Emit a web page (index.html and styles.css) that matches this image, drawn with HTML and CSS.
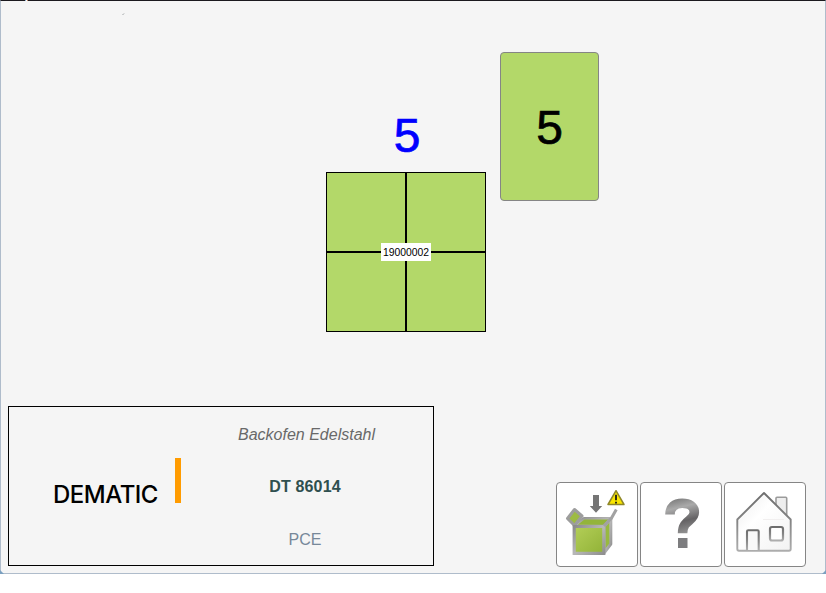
FILE: index.html
```html
<!DOCTYPE html>
<html lang="de">
<head>
<meta charset="utf-8">
<title>Dematic</title>
<link rel="stylesheet" href="styles.css">
</head>
<body>
<main class="screen">
  <svg class="specks" width="130" height="18" aria-hidden="true">
    <path d="M25 .5h1" stroke="#8fb4d2"/><path d="M26 .5h1" stroke="#fff"/><path d="M27 .5h1" stroke="#c98c68"/>
    <path d="M122 14.5h2" stroke="#c9cbcc"/><path d="M123 13.5h2" stroke="#dedfdf"/>
  </svg>
  <section class="stage">
    <div class="source">
      <div class="source-count">5</div>
      <div class="tote">
        <span class="cell"></span><span class="cell"></span>
        <span class="cell"></span><span class="cell"></span>
        <span class="tote-id">19000002</span>
      </div>
    </div>
    <div class="target">5</div>
  </section>
  <section class="footer">
    <div class="product">
      <div class="brand"><span class="brand-name">DEMATIC</span><span class="brand-bar"></span></div>
      <div class="details">
        <div class="description">Backofen Edelstahl</div>
        <div class="article">DT 86014</div>
        <div class="unit">PCE</div>
      </div>
    </div>
    <nav class="actions">
      <button class="action" aria-label="Box">
        <svg width="80" height="83" viewBox="557 483 80 83">
          <defs>
            <linearGradient id="green" x1="0" y1="0" x2="1" y2="1"><stop offset="0" stop-color="#b4cf58"/><stop offset="1" stop-color="#91b237"/></linearGradient>
            <linearGradient id="edge" x1="0" y1="0" x2="1" y2="1"><stop offset="0" stop-color="#8c8c8c"/><stop offset=".5" stop-color="#b8b8b8"/><stop offset="1" stop-color="#909090"/></linearGradient>
          </defs>
          <path d="M574 526L584 518.200H611.500L603.500 526Z" fill="#93b43b" stroke="url(#edge)" stroke-width="2.600" stroke-linejoin="round"/>
          <path d="M567.500 518.500L574.500 509.500L582 516L574.500 525.500Z" fill="#9dbb43" stroke="#9d9d9d" stroke-width="3" stroke-linejoin="round"/>
          <path d="M604 526.500L610.800 518.500V544L604 553Z" fill="#98b940" stroke="url(#edge)" stroke-width="3" stroke-linejoin="round"/>
          <path d="M574.200 526.500H603.800V553.300H574.200Z" fill="url(#green)" stroke="url(#edge)" stroke-width="3.200"/>
          <path d="M604 526L611.500 518L616.300 509.500" fill="none" stroke="#a2a2a2" stroke-width="3"/>
          <path d="M593 495H599V506H602.200L596 512.800L589.800 506H593Z" fill="#757575"/>
          <path d="M616 490.700L624 504.500H608Z" fill="#fae600" stroke="#8f8728" stroke-width="1.500" stroke-linejoin="round"/>
          <path d="M616 494.800V500.300M616 501.700V503.600" stroke="#292713" stroke-width="1.900"/>
        </svg>
      </button>
      <button class="action" aria-label="Hilfe">
        <svg width="80" height="83" viewBox="641 483 80 83">
          <defs><linearGradient id="steel" gradientUnits="userSpaceOnUse" x1="673" y1="498" x2="682" y2="535"><stop offset="0" stop-color="#777"/><stop offset=".28" stop-color="#aaa"/><stop offset=".65" stop-color="#656365"/><stop offset="1" stop-color="#959595"/></linearGradient></defs>
          <path d="M670 514.600C670 507 674.500 503.300 682.200 503.300C689.500 503.300 694.300 506.500 694.300 512.200C694.300 521.500 682.600 519.500 682.600 533.200" fill="none" stroke="url(#steel)" stroke-width="9.600"/>
          <path d="M678 538H687.500V548H678Z" fill="#7d7d7f"/>
        </svg>
      </button>
      <button class="action" aria-label="Startseite">
        <svg width="80" height="83" viewBox="725 483 80 83">
          <defs>
            <linearGradient id="wall" x1="0" y1="0" x2="1" y2="1"><stop offset="0" stop-color="#ececec"/><stop offset=".4" stop-color="#fff"/><stop offset="1" stop-color="#f2f2f2"/></linearGradient>
            <linearGradient id="line" x1="0" y1="0" x2="0" y2="1"><stop offset="0" stop-color="#6e6e6e"/><stop offset=".5" stop-color="#858585"/><stop offset="1" stop-color="#adadad"/></linearGradient>
          </defs>
          <path d="M776 510V498.200Q776 497.200 777 497.200H785.700Q786.700 497.200 786.700 498.200V518Z" fill="#eee" stroke="#9b9b9b" stroke-width="1.600"/>
          <path d="M737.300 519.500L764 493L790.700 519.500V549Q790.700 550.700 789 550.700H739Q737.300 550.700 737.300 549Z" fill="url(#wall)" stroke="url(#line)" stroke-width="1.900" stroke-linejoin="round"/>
          <path d="M763 519.500H784" stroke="#f1efef"/>
          <path d="M747 550V531.500Q747 530.300 748.300 530.300H757.500Q758.700 530.300 758.700 531.500V550" fill="#f9f9f9" stroke="url(#line)" stroke-width="2.100"/>
          <rect x="770" y="527" width="13" height="13.500" rx="2" fill="#fff" stroke="url(#line)" stroke-width="2.200"/>
        </svg>
      </button>
    </nav>
  </section>
</main>
</body>
</html>
```
FILE: styles.css
```css
* { box-sizing: border-box; }
body { margin: 0; background: #fff; font-family: "Liberation Sans", Arial, sans-serif; }
.screen {
  position: relative;
  height: 574px;
  border: 1px solid #afbccb;
  border-top-color: #1b191e;
  background: #f5f5f5;
}
.screen::before, .screen::after {
  content: "";
  position: absolute;
  bottom: -1px;
  border-top: 4px solid transparent;
}
.screen::before { left: -1px; border-left: 4px solid #7ba0c0; }
.screen::after { right: -1px; border-right: 4px solid #7ba0c0; }
.specks { position: absolute; top: -1px; left: -1px; }
.stage {
  display: flex;
  gap: 14px;
  height: 405px;
  padding: 51px 0 0 325px;
}
.source { width: 160px; padding-top: 56px; }
.source-count {
  height: 64px;
  padding-left: 2px;
  color: #00f;
  font-size: 48px;
  line-height: 56px;
  text-align: center;
  -webkit-text-stroke: 0.700px;
}
.tote {
  position: relative;
  display: grid;
  grid-template-columns: 1fr 1fr;
  grid-template-rows: 1fr 1fr;
  gap: 2px;
  height: 160px;
  border: 1px solid #000;
  background: #000;
}
.cell { background: #b3d869; }
.tote-id {
  position: absolute;
  top: 70px;
  left: 54px;
  width: 50px;
  height: 18px;
  background: #fff;
  font-size: 10.400px;
  line-height: 19px;
  text-align: center;
}
.target {
  width: 99px;
  height: 149px;
  border: 1px solid #858585;
  border-radius: 4px;
  background: #b3d869;
  font-size: 48px;
  line-height: 149px;
  text-align: center;
  -webkit-text-stroke: 0.700px;
}
.footer { display: flex; justify-content: space-between; padding: 0 19px 0 7px; }
.product { display: flex; width: 426px; height: 160px; border: 1px solid #000; }
.brand { display: flex; width: 172px; padding: 51px 0 0 44px; justify-content: space-between; }
.brand-name {
  padding-top: 23px;
  font-family: Inter, sans-serif;
  font-size: 24px;
  font-weight: 500;
  line-height: 28px;
  letter-spacing: -0.500px;
}
.brand-bar { width: 6px; height: 45px; background: #ff9b00; }
.details { width: 248px; text-align: center; font-size: 16px; line-height: 18px; }
.description { padding: 19px 0 0 3px; color: #696969; font-style: italic; }
.article { padding-top: 34px; color: #2f4f4f; font-weight: bold; letter-spacing: 0.150px; }
.unit { padding-top: 35px; color: #778899; }
.actions { display: flex; gap: 2px; padding-top: 76px; }
.action {
  width: 82px;
  height: 85px;
  padding: 0;
  border: 1px solid #858585;
  border-radius: 4px;
  background: #fff;
}
.action svg { display: block; }
```
